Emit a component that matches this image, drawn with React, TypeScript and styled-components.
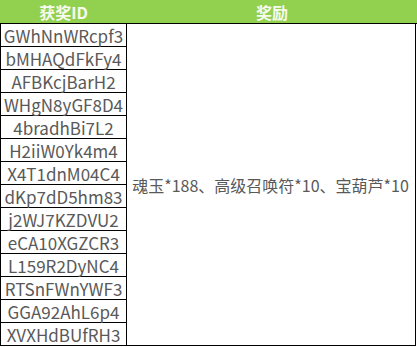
import React from 'react';
import styled, { createGlobalStyle } from 'styled-components';

const GlobalStyle = createGlobalStyle`
  html, body {
    margin: 0;
    padding: 0;
    background: #fff;
  }
  body {
    font-family: "Noto Sans CJK SC", "Noto Sans", sans-serif;
  }
`;

const Table = styled.div`
  width: 417px;
  display: flex;
  flex-direction: column;
`;

const HeaderRow = styled.div`
  display: flex;
  height: 23px;
  background-color: #92d050;
  border-bottom: 1px solid #000;
`;

const HeaderCell = styled.div<{ $width?: number }>`
  ${(p) => (p.$width ? `width: ${p.$width}px;` : 'flex: 1;')}
  display: flex;
  align-items: center;
  justify-content: center;
  color: #f7fbef;
  font-size: 16px;
  font-weight: bold;
  line-height: 1;
`;

const Body = styled.div`
  width: 414px;
  display: grid;
  grid-template-columns: 125px 288px;
  border-left: 1px solid #000;
  border-right: 1px solid #000;
  border-bottom: 1px solid #000;
`;

const IdColumn = styled.div`
  display: flex;
  flex-direction: column;
`;

const IdCell = styled.div`
  height: 22px;
  display: flex;
  align-items: center;
  justify-content: center;
  color: #595959;
  font-size: 17px;
  line-height: 1;
  white-space: nowrap;
  border-bottom: 1px solid #000;

  &:last-child {
    border-bottom: none;
  }
`;

const RewardCell = styled.div`
  border-left: 1px solid #000;
  display: flex;
  align-items: center;
  justify-content: center;
  color: #595959;
  font-size: 16px;
  white-space: nowrap;
`;

const ids = [
  'GWhNnWRcpf3',
  'bMHAQdFkFy4',
  'AFBKcjBarH2',
  'WHgN8yGF8D4',
  '4bradhBi7L2',
  'H2iiW0Yk4m4',
  'X4T1dnM04C4',
  'dKp7dD5hm83',
  'j2WJ7KZDVU2',
  'eCA10XGZCR3',
  'L159R2DyNC4',
  'RTSnFWnYWF3',
  'GGA92AhL6p4',
  'XVXHdBUfRH3',
];

const App = () => {
  return (
    <>
      <GlobalStyle />
      <Table>
        <HeaderRow>
          <HeaderCell $width={127}>获奖ID</HeaderCell>
          <HeaderCell>奖励</HeaderCell>
        </HeaderRow>
        <Body>
          <IdColumn>
            {ids.map((id) => (
              <IdCell key={id}>{id}</IdCell>
            ))}
          </IdColumn>
          <RewardCell>魂玉*188、高级召唤符*10、宝葫芦*10</RewardCell>
        </Body>
      </Table>
    </>
  );
};

export default App;
